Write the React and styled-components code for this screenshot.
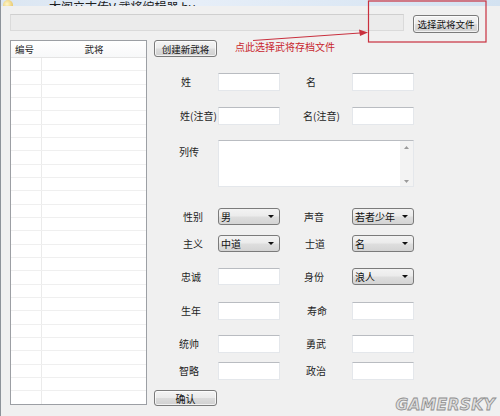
import React from "react"
import styled, { createGlobalStyle } from "styled-components"

const Global = createGlobalStyle`
  html, body {
    margin: 0;
    padding: 0;
    background: #f0f0f0;
  }
  body {
    font-family: "Noto Sans CJK SC", "Noto Sans", sans-serif;
    color: #1e1e1e;
  }
`

const Window = styled.div`
  position: relative;
  width: 500px;
  height: 416px;
  overflow: hidden;
  background: #f0f0f0;
  border-left: 1px solid #8d939a;
  box-sizing: border-box;
`

const TitleBar = styled.div`
  height: 6px;
  display: flex;
  align-items: flex-end;
  overflow: hidden;
  background: linear-gradient(90deg, #dbe6f2 0%, #e6eef8 40%, #d3e2f1 100%);
`

const AppIcon = styled.div`
  width: 10px;
  height: 10px;
  margin: 0 0 -4px 2px;
  border-radius: 50%;
  background: radial-gradient(circle at 40% 40%, #fff6c8, #e0b84a);
  flex: none;
`

const Title = styled.div`
  margin-left: 36px;
  font-size: 12px;
  line-height: 12px;
  margin-bottom: -7px;
  color: #202020;
  white-space: nowrap;
`

const Body = styled.div`
  padding: 8px 0 0 9px;
  display: flex;
  flex-direction: column;
`

const FileRow = styled.div`
  display: flex;
  align-items: flex-start;
  gap: 9px;
`

const PathBox = styled.div`
  width: 394px;
  height: 17px;
  box-sizing: border-box;
  background: #ebebeb;
  border: 1px solid #dadada;
  border-top-color: #cfcfcf;
`

const Button = styled.div`
  width: ${p => p.$w}px;
  height: ${p => p.$h}px;
  margin-top: ${p => p.$mt || 0}px;
  box-sizing: border-box;
  display: flex;
  align-items: center;
  justify-content: center;
  border: 1px solid #7a7a7a;
  border-radius: 3px;
  background: linear-gradient(#f4f4f4 0%, #ebebeb 48%, #dcdcdc 52%, #d0d0d0 100%);
  box-shadow: inset 0 0 0 1px rgba(255, 255, 255, 0.7);
  font-size: ${p => p.$fs || 9.5}px;
  color: #111;
  white-space: nowrap;
`

const Main = styled.div`
  display: flex;
  gap: 7px;
  margin-top: 7px;
`

const ListView = styled.div`
  width: 137px;
  height: 365px;
  box-sizing: border-box;
  border: 1px solid #9c9fa4;
  background: #fff;
  display: flex;
  flex-direction: column;
  overflow: hidden;
`

const ListHead = styled.div`
  height: 16px;
  flex: none;
  display: grid;
  grid-template-columns: 31px 1fr;
  align-items: center;
  border-bottom: 1px solid #e4e4e4;
  background: linear-gradient(#ffffff, #f7f8f9);
  font-size: 9.5px;
`

const HeadCell = styled.div`
  padding-left: ${p => (p.$center ? 0 : 4)}px;
  text-align: ${p => (p.$center ? "center" : "left")};
`

const ListRow = styled.div`
  height: 13.33px;
  flex: none;
  display: grid;
  grid-template-columns: 31px 1fr;
  box-sizing: border-box;
  border-bottom: 1px solid #efefef;
`

const ListCell = styled.div`
  border-right: ${p => (p.$first ? "1px solid #ebebeb" : "none")};
`

const Panel = styled.div`
  display: flex;
  flex-direction: column;
`

const PanelHead = styled.div`
  display: flex;
  align-items: center;
  gap: 18px;
`

const Hint = styled.div`
  font-size: 10px;
  color: #c8262e;
  margin-top: -4px;
`

const Form = styled.div`
  display: flex;
  flex-direction: column;
  margin-left: 25px;
`

const Row = styled.div`
  display: grid;
  grid-template-columns: 39px 62px 23px 49px 62px;
  height: ${p => p.$h}px;
  margin-top: ${p => p.$mt}px;
  align-items: ${p => (p.$top ? "start" : "center")};
`

const Label = styled.div`
  font-size: 10px;
  line-height: 12px;
  padding-left: ${p => p.$pad}px;
  padding-top: ${p => (p.$top ? 6 : 0)}px;
  white-space: nowrap;
`

const Input = styled.div`
  height: ${p => p.$h}px;
  box-sizing: border-box;
  background: #fff;
  border: 1px solid #e4e7eb;
  border-top-color: #b9bcc1;
`

const Memo = styled.div`
  grid-column: 2 / 6;
  height: 47px;
  box-sizing: border-box;
  background: #fff;
  border: 1px solid #e4e7eb;
  border-top-color: #b9bcc1;
  display: flex;
  justify-content: flex-end;
`

const ScrollBar = styled.div`
  width: 13px;
  background: #f3f3f3;
  display: flex;
  flex-direction: column;
  justify-content: space-between;
  align-items: center;
  padding: 5px 0 3px;
  box-sizing: border-box;
`

const Combo = styled.div`
  height: 17px;
  box-sizing: border-box;
  border: 1px solid #7b7b7b;
  border-radius: 3px;
  background: linear-gradient(#f3f3f3 0%, #ebebeb 48%, #dedede 52%, #d4d4d4 100%);
  display: flex;
  align-items: center;
  justify-content: space-between;
  padding: 0 5px 0 2px;
  font-size: 10px;
  color: #111;
`

const Annotation = styled.svg`
  position: absolute;
  left: 0;
  top: 0;
  pointer-events: none;
`

const Watermark = styled.div`
  position: absolute;
  right: 5px;
  bottom: 2px;
  font-family: "DejaVu Sans", sans-serif;
  font-weight: bold;
  font-style: italic;
  font-size: 15.5px;
  letter-spacing: 0.3px;
  color: #dedede;
  -webkit-text-stroke: 0.8px #8e8e8e;
  pointer-events: none;
`

const Arrow = ({ up }) => (
  <svg width="5" height="3" viewBox="0 0 5 3">
    <polygon points={up ? "0,3 5,3 2.5,0" : "0,0 5,0 2.5,3"} fill="#9a9a9a" />
  </svg>
)

const DropArrow = () => (
  <svg width="6" height="3" viewBox="0 0 6 3">
    <polygon points="0,0 6,0 3,3" fill="#111" />
  </svg>
)

const Field = ({ item }) =>
  item.combo ? (
    <Combo>
      <span>{item.combo}</span>
      <DropArrow />
    </Combo>
  ) : (
    <Input $h={item.h || 18} />
  )

const rows = [
  { mt: 16, h: 18, l: ["姓", 2], r: ["名", 3], a: {}, b: {} },
  { mt: 16, h: 18, l: ["姓(注音)", 1], r: ["名(注音)", 0], a: {}, b: {} },
  { mt: 15, h: 47, l: ["列传", 0], memo: true },
  { mt: 21, h: 17, l: ["性别", 4], r: ["声音", 1], a: { combo: "男" }, b: { combo: "若者少年" } },
  { mt: 10, h: 17, l: ["主义", 4], r: ["士道", 2], a: { combo: "中道" }, b: { combo: "名" } },
  { mt: 16, h: 17, l: ["忠诚", 2], r: ["身份", 1], a: { h: 17 }, b: { combo: "浪人" } },
  { mt: 17, h: 18, l: ["生年", 2], r: ["寿命", 4], a: {}, b: {} },
  { mt: 15, h: 18, l: ["统帅", 0], r: ["勇武", 3], a: {}, b: {} },
  { mt: 9, h: 18, l: ["智略", 0], r: ["政治", 3], a: {}, b: {} },
]

const listRows = Array.from({ length: 26 })

export default function App() {
  return (
    <Window>
      <Global />
      <TitleBar>
        <AppIcon />
        <Title>太阁立志传V 武将编辑器 by</Title>
      </TitleBar>
      <Body>
        <FileRow>
          <PathBox />
          <Button $w={66} $h={18} $mt={1}>
            选择武将文件
          </Button>
        </FileRow>
        <Main>
          <ListView>
            <ListHead>
              <HeadCell>编号</HeadCell>
              <HeadCell $center>武将</HeadCell>
            </ListHead>
            {listRows.map((_, i) => (
              <ListRow key={i}>
                <ListCell $first />
                <ListCell />
              </ListRow>
            ))}
          </ListView>
          <Panel>
            <PanelHead>
              <Button $w={63} $h={17}>
                创建新武将
              </Button>
              <Hint>点此选择武将存档文件</Hint>
            </PanelHead>
            <Form>
              {rows.map((row, i) =>
                row.memo ? (
                  <Row key={i} $mt={row.mt} $h={row.h} $top>
                    <Label $pad={row.l[1]} $top>
                      {row.l[0]}
                    </Label>
                    <Memo>
                      <ScrollBar>
                        <Arrow up />
                        <Arrow />
                      </ScrollBar>
                    </Memo>
                  </Row>
                ) : (
                  <Row key={i} $mt={row.mt} $h={row.h}>
                    <Label $pad={row.l[1]}>{row.l[0]}</Label>
                    <Field item={row.a} />
                    <div />
                    <Label $pad={row.r[1]}>{row.r[0]}</Label>
                    <Field item={row.b} />
                  </Row>
                )
              )}
            </Form>
            <Button $w={63} $h={16} $mt={10} $fs={10}>
              确认
            </Button>
          </Panel>
        </Main>
      </Body>
      <Annotation width="500" height="50" viewBox="0 0 500 50">
        <rect x="367.5" y="1" width="117.5" height="41" fill="none" stroke="#c9303e" strokeWidth="1.2" />
        <line x1="252" y1="40.5" x2="359" y2="33" stroke="#c9303e" strokeWidth="1" />
        <polygon points="367,32.5 358,29.5 359,36" fill="#c9303e" />
      </Annotation>
      <Watermark>GAMERSKY</Watermark>
    </Window>
  )
}
